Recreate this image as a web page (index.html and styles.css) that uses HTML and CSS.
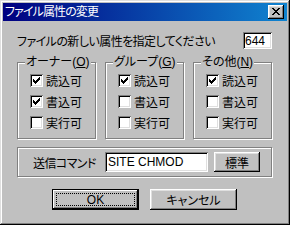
FILE: index.html
```html
<!DOCTYPE html>
<html lang="ja">
<head>
  <meta charset="UTF-8" />
  <title>ファイル属性の変更</title>
  <link rel="stylesheet" href="styles.css">
</head>
<body>
  <div class="window">
    <div class="titlebar">
      <span class="title">ファイル属性の変更</span>
      <span class="close">
        <svg width="8" height="7" viewBox="0 0 8 7" shape-rendering="crispEdges">
          <path d="M0 0h2v1H0zM6 0h2v1H6zM1 1h2v1H1zM5 1h2v1H5zM2 2h4v1H2zM3 3h2v1H3zM2 4h4v1H2zM1 5h2v1H1zM5 5h2v1H5zM0 6h2v1H0zM6 6h2v1H6z"/>
        </svg>
      </span>
    </div>

    <div class="content">
      <div class="mode-row">
        <span class="mode-label">ファイルの新しい属性を指定してください</span>
        <span class="field mode-field">644</span>
      </div>

      <div class="groups">
        <fieldset class="group">
          <legend>オーナー(<u>O</u>)</legend>
          <label class="check"><span class="box"><svg class="tick" width="7" height="7" viewBox="0 0 7 7" shape-rendering="crispEdges"><path d="M6 0h1v1H6zM5 1h2v1H5zM0 2h1v1H0zM4 2h3v1H4zM0 3h2v1H0zM3 3h3v1H3zM0 4h5v1H0zM1 5h3v1H1zM2 6h1v1H2z"/></svg></span>読込可</label>
          <label class="check"><span class="box"><svg class="tick" width="7" height="7" viewBox="0 0 7 7" shape-rendering="crispEdges"><path d="M6 0h1v1H6zM5 1h2v1H5zM0 2h1v1H0zM4 2h3v1H4zM0 3h2v1H0zM3 3h3v1H3zM0 4h5v1H0zM1 5h3v1H1zM2 6h1v1H2z"/></svg></span>書込可</label>
          <label class="check"><span class="box"></span>実行可</label>
        </fieldset>

        <fieldset class="group">
          <legend>グループ(<u>G</u>)</legend>
          <label class="check"><span class="box"><svg class="tick" width="7" height="7" viewBox="0 0 7 7" shape-rendering="crispEdges"><path d="M6 0h1v1H6zM5 1h2v1H5zM0 2h1v1H0zM4 2h3v1H4zM0 3h2v1H0zM3 3h3v1H3zM0 4h5v1H0zM1 5h3v1H1zM2 6h1v1H2z"/></svg></span>読込可</label>
          <label class="check"><span class="box"></span>書込可</label>
          <label class="check"><span class="box"></span>実行可</label>
        </fieldset>

        <fieldset class="group">
          <legend>その他(<u>N</u>)</legend>
          <label class="check"><span class="box"><svg class="tick" width="7" height="7" viewBox="0 0 7 7" shape-rendering="crispEdges"><path d="M6 0h1v1H6zM5 1h2v1H5zM0 2h1v1H0zM4 2h3v1H4zM0 3h2v1H0zM3 3h3v1H3zM0 4h5v1H0zM1 5h3v1H1zM2 6h1v1H2z"/></svg></span>読込可</label>
          <label class="check"><span class="box"></span>書込可</label>
          <label class="check"><span class="box"></span>実行可</label>
        </fieldset>
      </div>

      <div class="command">
        <span class="command-label">送信コマンド</span>
        <span class="field cmd-field">SITE CHMOD</span>
        <span class="btn std-btn">標準</span>
      </div>

      <div class="actions">
        <span class="btn default-btn"><span class="focus">OK</span></span>
        <span class="btn">キャンセル</span>
      </div>
    </div>
  </div>
</body>
</html>
```

FILE: styles.css
```css
body {
  margin: 0;
  background: #c0c0c0;
  font-family: 'Liberation Sans', 'Noto Sans CJK JP', sans-serif;
  font-size: 12px;
  font-feature-settings: "palt";
  color: #000;
}

.window {
  width: 290px;
  height: 225px;
  box-sizing: border-box;
  padding: 3px;
  background: #c0c0c0;
  box-shadow: inset -1px -1px #000, inset 1px 1px #dfdfdf,
              inset -2px -2px #808080, inset 2px 2px #fff;
}

.titlebar {
  height: 18px;
  display: flex;
  align-items: center;
  justify-content: space-between;
  padding: 0 3px 0 2px;
  background: linear-gradient(to right, #000080, #1084d0);
}

.title {
  color: white;
  line-height: 18px;
  letter-spacing: -0.9px;
}

.close {
  width: 16px;
  height: 14px;
  box-sizing: border-box;
  display: flex;
  align-items: center;
  justify-content: center;
  padding: 0 1px 1px 0;
  background: #c0c0c0;
  box-shadow: inset -1px -1px #000, inset 1px 1px #fff,
              inset -2px -2px #808080, inset 2px 2px #dfdfdf;
}

.content {
  padding: 11px 15px 0 14px;
}

.mode-row {
  display: flex;
  align-items: center;
  justify-content: space-between;
  height: 17px;
}

.mode-label {
  letter-spacing: -0.55px;
}

.field {
  box-sizing: border-box;
  display: flex;
  align-items: center;
  background: white;
  padding: 0 3px;
  font-size: 12px;
  box-shadow: inset 1px 1px #808080, inset -1px -1px #fff,
              inset 2px 2px #000, inset -2px -2px #dfdfdf;
}

.mode-field {
  width: 29px;
  height: 17px;
  padding-left: 2px;
}

.groups {
  display: grid;
  grid-template-columns: repeat(3, 1fr);
  gap: 9px;
  margin-top: 6px;
}

.group {
  margin: 0;
  padding: 1px 0 5px 0;
  border: 1px solid #808080;
  box-shadow: 1px 1px 0 #fff, inset 1px 1px 0 #fff;
  min-width: 0;
}

.group legend {
  margin-left: 7px;
  padding: 0 1px;
  line-height: 14px;
  white-space: nowrap;
  background: #c0c0c0;
}

.check {
  display: flex;
  align-items: center;
  gap: 3px;
  height: 21px;
  padding-left: 12px;
}

.box {
  width: 13px;
  height: 13px;
  box-sizing: border-box;
  display: flex;
  align-items: center;
  justify-content: center;
  background: white;
  box-shadow: inset 1px 1px #808080, inset -1px -1px #fff,
              inset 2px 2px #000, inset -2px -2px #dfdfdf;
}

.command {
  display: flex;
  align-items: center;
  margin-top: 8px;
  padding: 4px 0 4px 15px;
  border: 1px solid #808080;
  box-shadow: 1px 1px 0 #fff, inset 1px 1px 0 #fff;
}

.command-label {
  width: 72px;
  letter-spacing: -0.6px;
}

.cmd-field {
  width: 103px;
  height: 20px;
  margin-right: 6px;
}

.btn {
  box-sizing: border-box;
  display: flex;
  align-items: center;
  justify-content: center;
  background: #c0c0c0;
  box-shadow: inset -1px -1px #000, inset 1px 1px #fff,
              inset -2px -2px #808080, inset 2px 2px #dfdfdf;
}

.std-btn {
  width: 46px;
  height: 20px;
}

.actions {
  display: flex;
  justify-content: center;
  gap: 11px;
  margin-top: 12px;
}

.actions .btn {
  width: 87px;
  height: 21px;
}

.default-btn {
  padding: 4px;
  border: 1px solid #000;
  box-shadow: inset -1px -1px #000, inset 1px 1px #fff,
              inset -2px -2px #808080;
}

.focus {
  flex: 1;
  align-self: stretch;
  display: flex;
  align-items: center;
  justify-content: center;
  outline: 1px dotted #000;
}
```
